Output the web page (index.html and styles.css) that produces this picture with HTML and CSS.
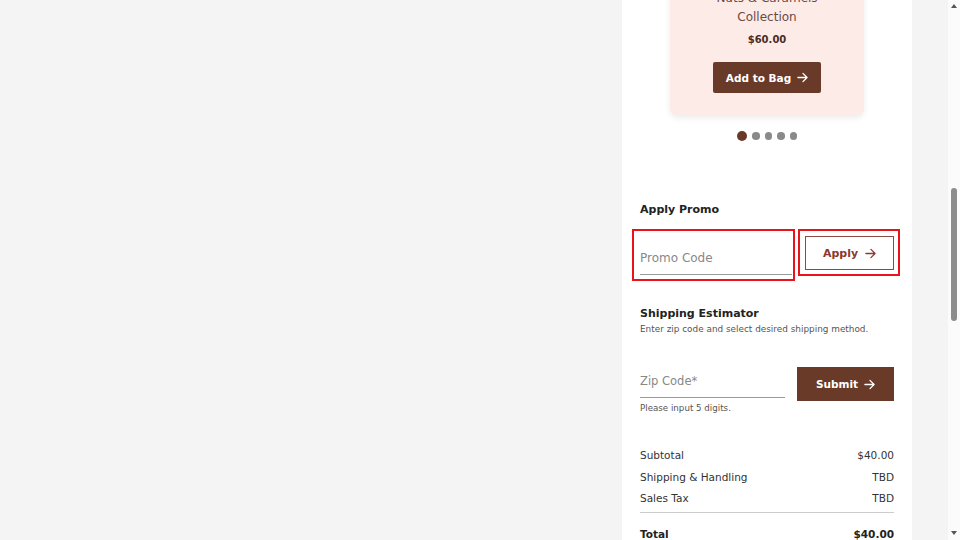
FILE: index.html
```html
<!DOCTYPE html>
<html lang="en">
<head>
<meta charset="utf-8">
<title>Cart</title>
<link rel="stylesheet" href="styles.css">
</head>
<body>
<div class="page">
  <main class="left"></main>
  <aside class="panel">
    <div class="card">
      <div class="card-title">Nuts &amp; Caramels<br>Collection</div>
      <div class="card-price">$60.00</div>
      <button class="btn btn-dark btn-bag">Add to Bag
        <svg class="arrow" viewBox="0 0 12 12"><path d="M1 6h10M6.5 1.5L11 6l-4.5 4.5"/></svg>
      </button>
    </div>
    <div class="dots">
      <span class="dot active"></span><span class="dot"></span><span class="dot"></span><span class="dot"></span><span class="dot"></span>
    </div>

    <h2 class="section-title promo-title">Apply Promo</h2>
    <div class="promo-row">
      <div class="promo-field">
        <div class="field"><span class="placeholder">Promo Code</span></div>
      </div>
      <div class="apply-wrap">
        <button class="btn btn-outline">Apply
          <svg class="arrow" viewBox="0 0 12 12"><path d="M1 6h10M6.5 1.5L11 6l-4.5 4.5"/></svg>
        </button>
      </div>
    </div>

    <h2 class="section-title ship-title">Shipping Estimator</h2>
    <p class="sub">Enter zip code and select desired shipping method.</p>
    <div class="zip-row">
      <div class="field zip"><span class="placeholder">Zip Code*</span></div>
      <button class="btn btn-dark btn-submit">Submit
        <svg class="arrow" viewBox="0 0 12 12"><path d="M1 6h10M6.5 1.5L11 6l-4.5 4.5"/></svg>
      </button>
    </div>
    <p class="helper">Please input 5 digits.</p>

    <div class="summary">
      <div class="row"><span>Subtotal</span><span>$40.00</span></div>
      <div class="row"><span>Shipping &amp; Handling</span><span>TBD</span></div>
      <div class="row"><span>Sales Tax</span><span>TBD</span></div>
      <div class="row total"><span>Total</span><span>$40.00</span></div>
    </div>
  </aside>
  <div class="gutter"></div>
  <div class="scrollbar">
    <span class="sb-up"></span>
    <span class="sb-thumb"></span>
    <span class="sb-down"></span>
  </div>
</div>
</body>
</html>
```

FILE: styles.css
```css
* { box-sizing: border-box; }
html, body {
  margin: 0;
  height: 540px;
  overflow: hidden;
  background: #f4f4f4;
  font-family: "DejaVu Sans", "Noto Sans", sans-serif;
  color: #2a2a2a;
}
.page {
  display: flex;
  height: 540px;
}
.left { flex: 1; }
.panel {
  width: 290px;
  background: #ffffff;
  padding: 0 18px;
  display: flex;
  flex-direction: column;
}
.gutter { width: 36px; }

/* product card */
.card {
  margin: -38px 30px 0;
  padding: 27px 10px 23px;
  background: #fdebe7;
  border-radius: 8px;
  box-shadow: 0 2px 6px rgba(0,0,0,0.08);
  display: flex;
  flex-direction: column;
  align-items: center;
  text-align: center;
}
.card-title {
  font-size: 12px;
  line-height: 19px;
  color: #6b4a42;
}
.card-price {
  margin-top: 5px;
  font-size: 10px;
  line-height: 16px;
  font-weight: bold;
  color: #4b2d25;
}
.btn {
  font-family: inherit;
  font-weight: bold;
  display: flex;
  align-items: center;
  justify-content: center;
  gap: 6px;
  cursor: pointer;
}
.btn-dark {
  background: #6a3a29;
  color: #ffffff;
  border: none;
}
.btn-bag {
  margin-top: 14px;
  width: 108px;
  height: 31px;
  border-radius: 2px;
  font-size: 10.5px;
}
.arrow {
  width: 11px;
  height: 11px;
  fill: none;
  stroke: currentColor;
  stroke-width: 1.4;
  stroke-linecap: round;
  stroke-linejoin: round;
}

.dots {
  margin-top: 15px;
  display: flex;
  justify-content: center;
  align-items: center;
  gap: 5px;
  height: 10px;
}
.dot {
  width: 7.5px;
  height: 7.5px;
  border-radius: 50%;
  background: #8a8a8a;
}
.dot.active {
  width: 10px;
  height: 10px;
  background: #6a3a29;
}

.section-title {
  margin: 0;
  font-size: 11px;
  line-height: 18px;
  font-weight: bold;
  color: #222;
}
.promo-title { margin-top: 60px; }

.promo-row {
  margin: 10px -6px 0 -8px;
  display: flex;
  align-items: flex-start;
  justify-content: space-between;
}
.promo-field {
  width: 163px;
  height: 52px;
  border: 2px solid #e8141c;
  padding: 0 1px 0 6px;
}
.field {
  border-bottom: 1px solid #9a9a9a;
  display: flex;
  align-items: flex-end;
}
.promo-field .field {
  height: 44px;
  padding-bottom: 9px;
}
.placeholder {
  font-size: 12px;
  color: #888;
}
.zip .placeholder { font-size: 11.5px; }
.apply-wrap {
  width: 102px;
  height: 47px;
  border: 2px solid #e8141c;
  padding: 5px 4px 4px 5px;
}
.btn-outline {
  width: 100%;
  height: 100%;
  background: #fff;
  border: 1px solid #8b4a3e;
  color: #8b3a2e;
  font-size: 11px;
  gap: 7px;
}

.ship-title { margin-top: 24px; }
.sub {
  margin: 0;
  font-size: 8.9px;
  line-height: 12px;
  color: #555;
}
.zip-row {
  margin-top: 32px;
  display: flex;
  justify-content: space-between;
  align-items: flex-start;
}
.field.zip {
  width: 145px;
  height: 31px;
  padding-bottom: 9px;
}
.btn-submit {
  width: 97px;
  height: 34px;
  font-size: 10.5px;
  border-radius: 0;
}
.helper {
  margin: 1px 0 0;
  font-size: 8.7px;
  line-height: 12px;
  color: #555;
}

.summary {
  margin-top: 31px;
  display: flex;
  flex-direction: column;
}
.row {
  display: flex;
  justify-content: space-between;
  font-size: 10.5px;
  line-height: 21.5px;
  color: #333;
}
.row:nth-child(3) {
  padding-bottom: 2px;
  border-bottom: 1px solid #ccc;
}
.row.total {
  margin-top: 11px;
  font-weight: bold;
  color: #222;
}

/* page scrollbar */
.scrollbar {
  width: 12px;
  background: #fbfbfb;
  display: flex;
  flex-direction: column;
  align-items: center;
}
.sb-up, .sb-down {
  width: 0;
  height: 0;
  border-left: 3.5px solid transparent;
  border-right: 3.5px solid transparent;
}
.sb-up {
  margin-top: 4px;
  border-bottom: 4px solid #555;
}
.sb-thumb {
  margin-top: 180px;
  width: 6px;
  height: 133px;
  border-radius: 3px;
  background: #8c8c8c;
}
.sb-down {
  margin-top: auto;
  margin-bottom: 5px;
  border-top: 4px solid #555;
}
```
